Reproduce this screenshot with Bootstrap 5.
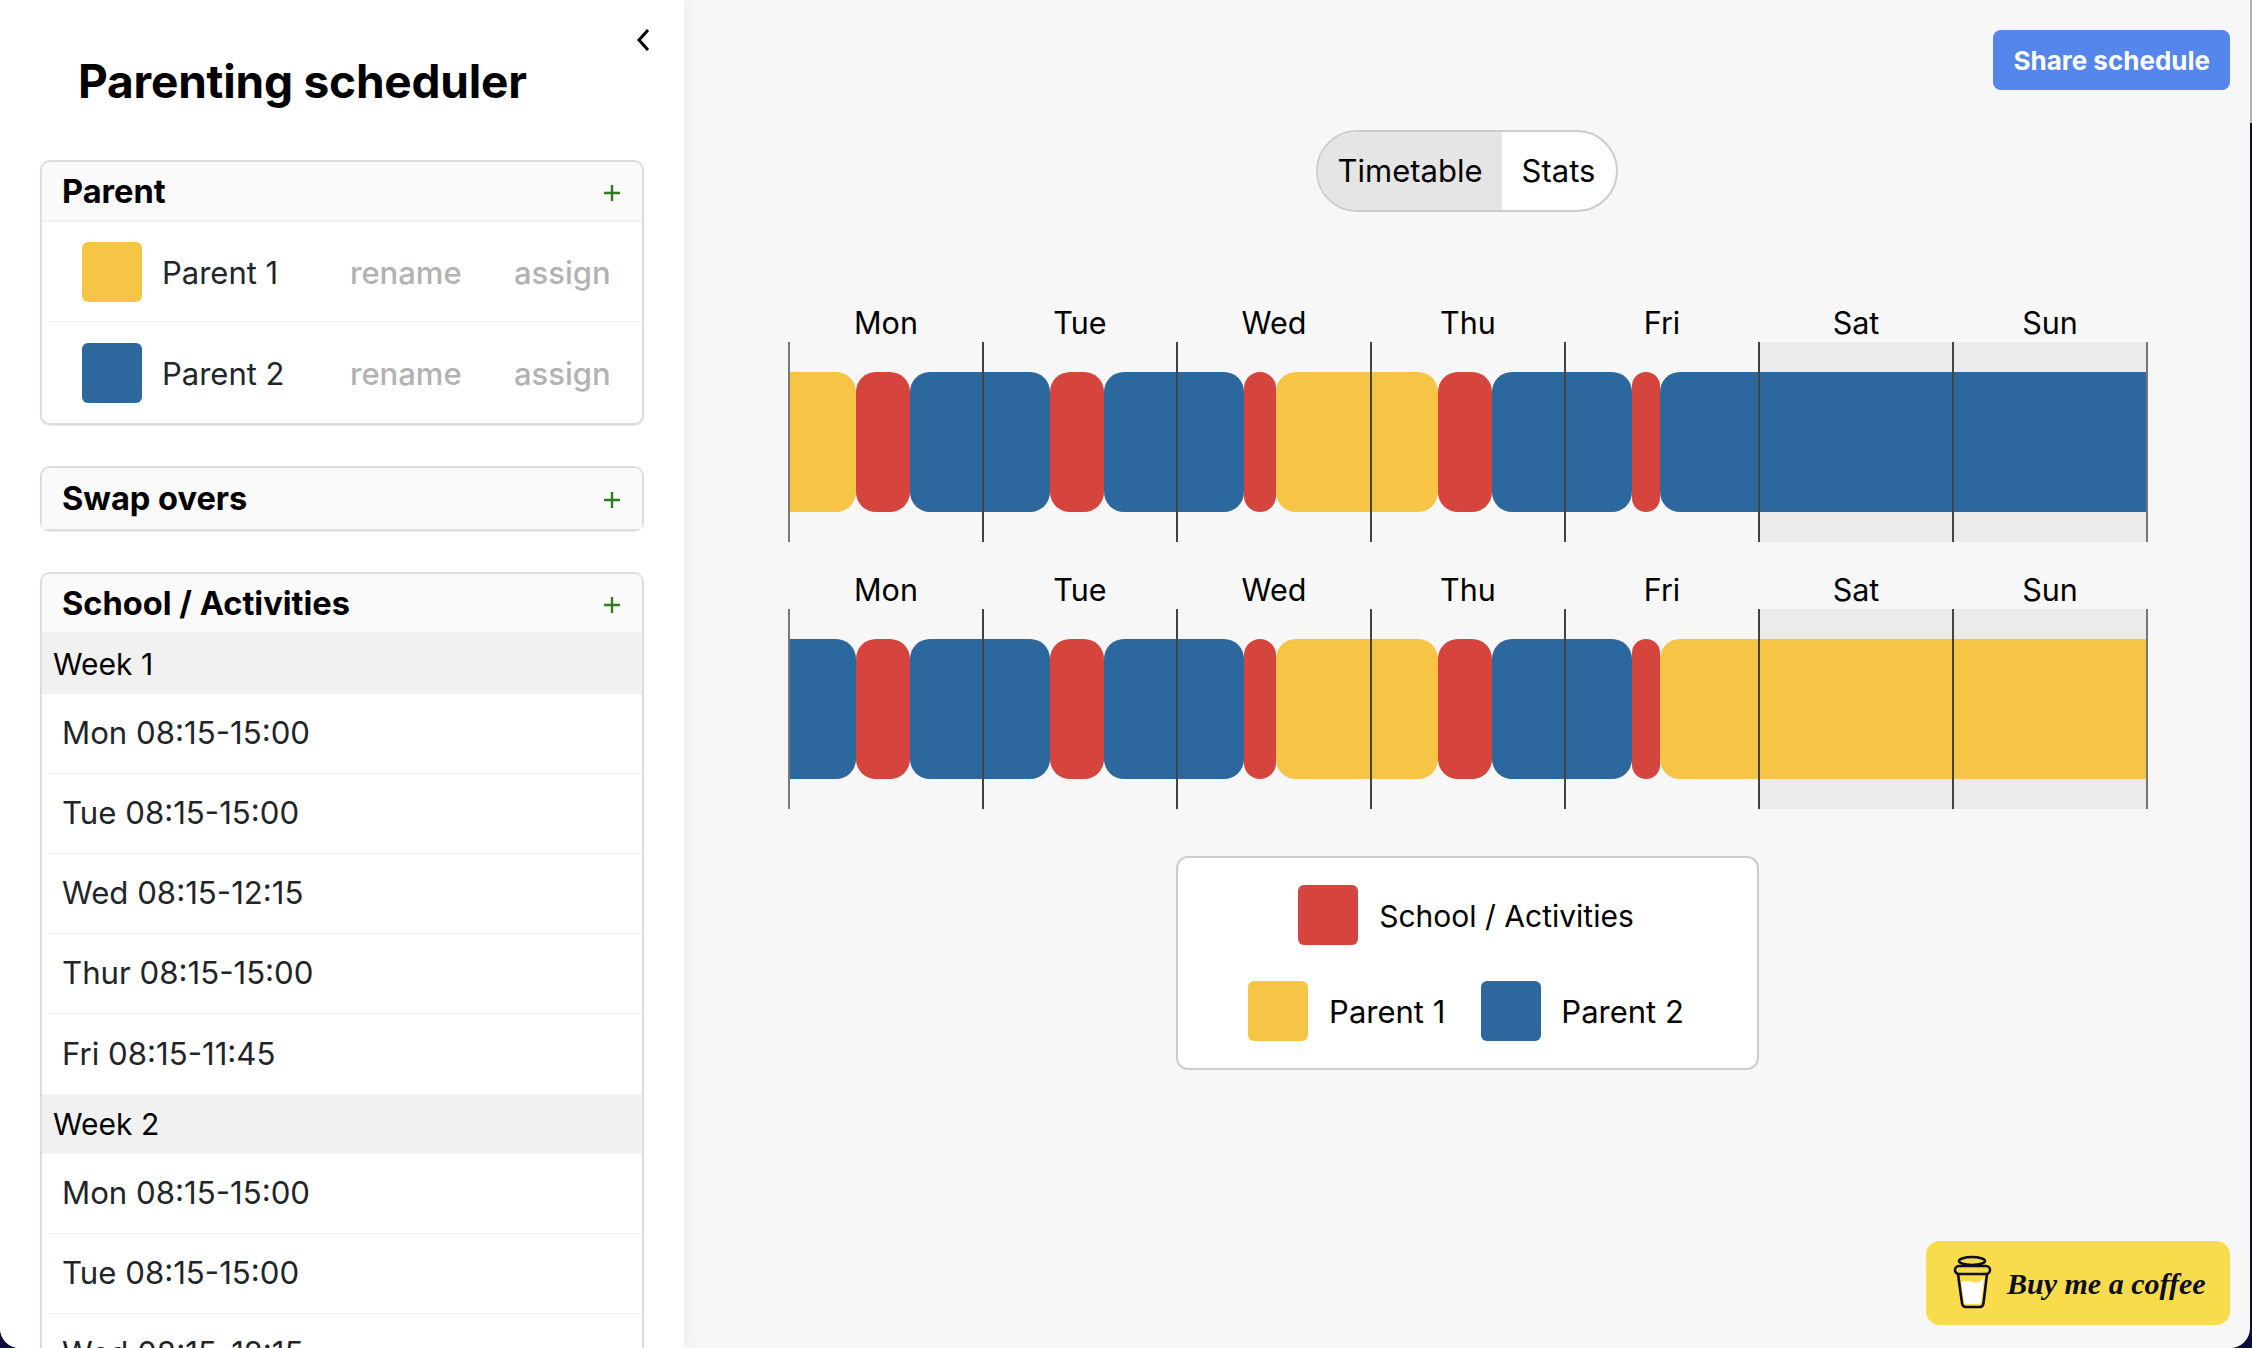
<!DOCTYPE html>
<html lang="en">
<head>
  <meta charset="UTF-8">
  <meta name="viewport" content="width=device-width, initial-scale=1.0">
  <title>Parenting scheduler</title>
  <link rel="stylesheet" href="https://cdn.jsdelivr.net/npm/bootstrap@5.3.0/dist/css/bootstrap.min.css">
  <style>
    :root {
      --cor-yellow: #f6c545;
      --cor-blue: #2c679d;
      --cor-red: #d5443d;
      --cor-border: #dcdcdc;
    }

    html, body {
      height: 100%;
      overflow: hidden;
    }

    body {
      font-family: Inter, "Liberation Sans", sans-serif;
      font-size: 30px;
      color: #000;
      background: linear-gradient(to bottom, #b4b4b4 0, #b4b4b4 123px, #0c0d3c 123px);
    }

    .app-window {
      width: 2250px;
      height: 100%;
      background-color: #f7f7f7;
      border-bottom-left-radius: 20px;
      border-bottom-right-radius: 20px;
      overflow: hidden;
    }

    .side-panel {
      width: 684px;
      flex: none;
      padding: 0 40px;
      background-color: #fff;
      box-shadow: 0 0 16px rgba(0, 0, 0, .07);
      overflow: hidden;
      z-index: 1;
    }

    .side-title {
      margin: 52px 0 50px 38px;
      font-size: 46px;
      line-height: 58px;
      font-weight: 700;
      letter-spacing: -.2px;
    }

    .collapse-btn {
      position: absolute;
      top: 28px;
      left: 636px;
      line-height: 0;
    }

    .side-card {
      margin-bottom: 41px;
      border: 2px solid var(--cor-border);
      border-radius: 10px;
      box-shadow: 0 1px 1px rgba(0, 0, 0, .1);
      --bs-card-inner-border-radius: 8px;
    }

    .side-card .card-header {
      height: 60px;
      padding: 0 21px 0 20px;
      background-color: #fafafa;
      border-bottom: 2px solid #f1f1f1;
      font-size: 32.6px;
      font-weight: 700;
    }

    .side-card .card-header svg {
      margin-top: 3px;
    }

    .side-card.collapsed .card-header {
      border-bottom: 0;
      height: 61px;
    }

    .parent-row {
      height: 100px;
      padding: 0 30px 0 40px;
      border-color: #f1f1f1;
      border-width: 0 0 2px;
    }

    .parent-row:last-child {
      border-bottom: 0;
      height: 101px;
    }

    .colour-box {
      width: 60px;
      height: 60px;
      flex: none;
      border-radius: 6px;
    }

    .parent-name {
      margin-left: 20px;
      padding-top: 3px;
      width: 188px;
      font-size: 31px;
    }

    .row-action {
      padding-top: 3px;
      color: #b2b2b2;
      font-size: 31px;
      font-weight: 500;
      margin-right: 51px;
      width: 113px;
    }

    .row-action:last-child {
      margin-right: 0;
      width: auto;
    }

    .week-head {
      height: 60px;
      padding: 0 11px;
      display: flex;
      align-items: center;
      background-color: #f1f1f1;
    }

    .time-row {
      height: 80px;
      padding: 0 20px;
      display: flex;
      align-items: center;
      border-color: #f1f1f1;
      border-width: 0 0 2px;
      font-size: 31.2px;
    }

    .time-row.no-line {
      border-bottom: 0;
    }

    .share-wrap {
      margin: 30px 20px 0 0;
    }

    .share-btn {
      height: 60px;
      padding: 0 20px;
      background-color: #5486ec;
      border: 0;
      border-radius: 8px;
      color: #fff;
      font-size: 26px;
      font-weight: 700;
    }

    .share-btn:hover {
      background-color: #4577dc;
      color: #fff;
    }

    .mode-toggle {
      margin-top: 40px;
      width: 302px;
      height: 82px;
      border: 2px solid #ccc;
      border-radius: 41px;
      background-color: #fff;
      overflow: hidden;
    }

    .mode-btn {
      padding: 0;
      border: 0;
      border-radius: 0;
      font-size: 31px;
      color: #000;
    }

    .mode-btn.on {
      width: 184px;
      flex: none;
      background-color: #e5e5e5;
    }

    .schedule {
      width: 1358px;
      margin: 85px 0 0 2px;
    }

    .week-block {
      margin-bottom: 22px;
    }

    .day-labels {
      height: 45px;
      line-height: 52px;
      font-size: 30.5px;
    }

    .day-labels div {
      flex: 1 1 0;
      text-align: center;
    }

    .week-track {
      position: relative;
      height: 200px;
      padding: 30px 0;
      background: linear-gradient(to right, transparent 71.43%, #ebebeb 71.43%);
    }

    .seg {
      height: 140px;
      border-radius: 20px;
    }

    .seg:first-child {
      border-top-left-radius: 0;
      border-bottom-left-radius: 0;
    }

    .seg:last-child {
      border-top-right-radius: 0;
      border-bottom-right-radius: 0;
    }

    .seg-p1 { background-color: var(--cor-yellow); }
    .seg-p2 { background-color: var(--cor-blue); }
    .seg-school { background-color: var(--cor-red); }

    .day-lines {
      position: absolute;
      inset: 0 -1px;
      display: flex;
      justify-content: space-between;
    }

    .day-lines i {
      width: 2px;
      background-color: #444;
    }

    .day-lines i:first-child,
    .day-lines i:last-child {
      background-color: #777;
    }

    .legend-box {
      width: 583px;
      height: 214px;
      margin-top: 25px;
      padding: 27px 2px 27px 0;
      background-color: #fff;
      border: 2px solid #ccc;
      border-radius: 12px;
    }

    .legend-school {
      margin-left: 21px;
      padding-top: 3px;
    }

    .legend-p1 {
      margin: 0 36px 0 21px;
      padding-top: 2px;
      font-size: 31px;
    }

    .legend-p2 {
      margin-left: 20px;
      padding-top: 2px;
      font-size: 31px;
    }

    .coffee-btn {
      width: 304px;
      height: 84px;
      margin: auto 20px 23px 0;
      padding-left: 27px;
      gap: 14px;
      background-color: #f9dc4b;
      border-radius: 14px;
      color: #0d0c22;
      font-family: "Liberation Serif", serif;
      font-style: italic;
      font-weight: 700;
      font-size: 30px;
      text-decoration: none;
      white-space: nowrap;
    }

    .coffee-btn svg {
      flex: none;
    }
  </style>
</head>
<body>
  <div class="app-window d-flex">
    <aside class="side-panel position-relative">
      <a href="#" class="collapse-btn" aria-label="Collapse">
        <svg width="14" height="24" viewBox="0 0 14 24" fill="none" stroke="#000" stroke-width="3"><path d="M12 2 3 12l9 10"/></svg>
      </a>
      <h1 class="side-title">Parenting scheduler</h1>

      <div class="card side-card">
        <div class="card-header d-flex justify-content-between align-items-center">
          <span>Parent</span>
          <svg width="18" height="18" viewBox="0 0 18 18" stroke="#2f7d1f" stroke-width="2.4"><path d="M9 1v16M1 9h16"/></svg>
        </div>
        <ul class="list-group list-group-flush" id="parentList"></ul>
      </div>

      <div class="card side-card collapsed">
        <div class="card-header d-flex justify-content-between align-items-center">
          <span>Swap overs</span>
          <svg width="18" height="18" viewBox="0 0 18 18" stroke="#2f7d1f" stroke-width="2.4"><path d="M9 1v16M1 9h16"/></svg>
        </div>
      </div>

      <div class="card side-card">
        <div class="card-header d-flex justify-content-between align-items-center">
          <span>School / Activities</span>
          <svg width="18" height="18" viewBox="0 0 18 18" stroke="#2f7d1f" stroke-width="2.4"><path d="M9 1v16M1 9h16"/></svg>
        </div>
        <ul class="list-group list-group-flush" id="schoolList"></ul>
      </div>
    </aside>

    <main class="flex-grow-1 d-flex flex-column align-items-center">
      <div class="align-self-end share-wrap">
        <button class="btn share-btn">Share schedule</button>
      </div>

      <div class="btn-group mode-toggle" role="group">
        <button class="btn mode-btn on">Timetable</button>
        <button class="btn mode-btn">Stats</button>
      </div>

      <div class="schedule" id="schedule"></div>

      <div class="legend-box d-flex flex-column justify-content-between">
        <div class="d-flex justify-content-center align-items-center">
          <span class="colour-box seg-school"></span>
          <span class="legend-school">School / Activities</span>
        </div>
        <div class="d-flex justify-content-center align-items-center">
          <span class="colour-box seg-p1"></span>
          <span class="legend-p1">Parent 1</span>
          <span class="colour-box seg-p2"></span>
          <span class="legend-p2">Parent 2</span>
        </div>
      </div>

      <a href="#" class="coffee-btn d-flex align-items-center align-self-end">
        <svg width="40" height="56" viewBox="0 0 40 56" fill="none" stroke="#0d0c22" stroke-width="2.6">
          <path d="M8 27q6-2 12 0t11-4l-3 24q0 2-2 2H13q-2 0-2-2z" fill="#fff" stroke="none"/>
          <ellipse cx="19" cy="6" rx="13" ry="4"/>
          <rect x="2" y="11" width="35" height="8" rx="4"/>
          <path d="M5 19l4 29q.5 4 4 4h14q3 0 3.500-4L34 19"/>
        </svg>
        <span>Buy me a coffee</span>
      </a>
    </main>
  </div>

  <script src="https://cdn.jsdelivr.net/npm/bootstrap@5.3.0/dist/js/bootstrap.bundle.min.js"></script>
  <script>
    const dias = ['Mon', 'Tue', 'Wed', 'Thu', 'Fri', 'Sat', 'Sun'];
    const nomesLista = ['Mon', 'Tue', 'Wed', 'Thur', 'Fri'];
    const escola = [['08:15', '15:00'], ['08:15', '15:00'], ['08:15', '12:15'], ['08:15', '15:00'], ['08:15', '11:45']];

    // who has the kids before each school slot, last entry runs to the end of Sunday
    const semanas = [
      ['p1', 'p2', 'p2', 'p1', 'p2', 'p2'],
      ['p2', 'p2', 'p2', 'p1', 'p2', 'p1']
    ];

    function horas(txt) {
      const [h, m] = txt.split(':').map(Number);
      return h + m / 60;
    }

    function mostrarPais() {
      const lista = document.getElementById('parentList');
      [['Parent 1', 'seg-p1'], ['Parent 2', 'seg-p2']].forEach(([nome, cor]) => {
        const li = document.createElement('li');
        li.className = 'list-group-item parent-row d-flex align-items-center';
        li.innerHTML = `
          <span class="colour-box ${cor}"></span>
          <span class="parent-name">${nome}</span>
          <span class="row-action">rename</span>
          <span class="row-action">assign</span>
        `;
        lista.appendChild(li);
      });
    }

    function mostrarEscola() {
      const lista = document.getElementById('schoolList');
      let html = '';
      [1, 2].forEach(n => {
        html += `<li class="week-head">Week ${n}</li>`;
        escola.forEach((par, i) => {
          const linha = i === escola.length - 1 ? ' no-line' : '';
          html += `<li class="list-group-item time-row${linha}">${nomesLista[i]} ${par[0]}-${par[1]}</li>`;
        });
      });
      lista.innerHTML = html;
    }

    function mostrarSemanas() {
      const total = 24 * 7;
      const caixa = document.getElementById('schedule');
      semanas.forEach(quem => {
        let inicio = 0;
        let barras = '';
        const add = (fim, classe) => {
          barras += `<div class="seg seg-${classe}" style="width: ${(fim - inicio) / total * 100}%"></div>`;
          inicio = fim;
        };
        escola.forEach((par, i) => {
          add(i * 24 + horas(par[0]), quem[i]);
          add(i * 24 + horas(par[1]), 'school');
        });
        add(total, quem[5]);

        const bloco = document.createElement('div');
        bloco.className = 'week-block';
        bloco.innerHTML = `
          <div class="day-labels d-flex">${dias.map(d => `<div>${d}</div>`).join('')}</div>
          <div class="week-track">
            <div class="d-flex">${barras}</div>
            <div class="day-lines">${'<i></i>'.repeat(8)}</div>
          </div>
        `;
        caixa.appendChild(bloco);
      });
    }

    document.addEventListener('DOMContentLoaded', function () {
      mostrarPais();
      mostrarEscola();
      mostrarSemanas();
    });
  </script>
</body>
</html>
